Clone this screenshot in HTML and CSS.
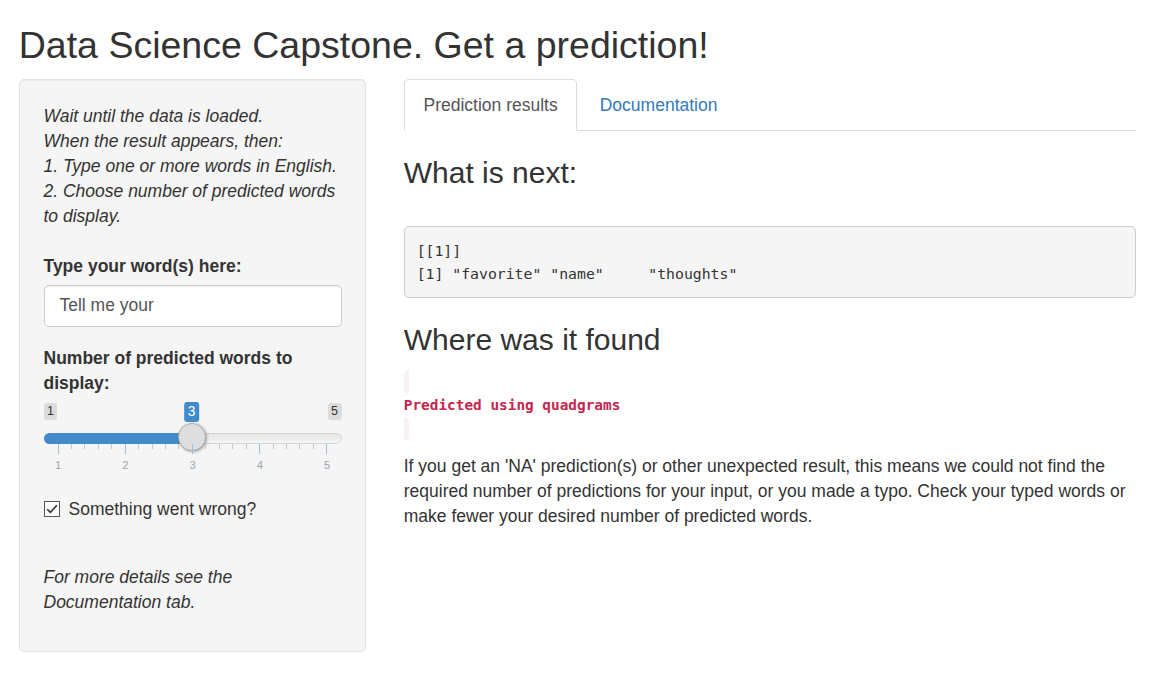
FILE: index.html
```html
<!DOCTYPE html>
<html>
<head>
<meta charset="utf-8">
<title>Data Science Capstone</title>
<link rel="stylesheet" href="styles.css">
</head>
<body>
<div class="container">
  <h2 class="title">Data Science Capstone. Get a prediction!</h2>
  <div class="row">
    <div class="sidebar">
      <form class="well">
        <p class="intro"><em>Wait until the data is loaded.<br>When the result appears, then:<br>1. Type one or more words in English.<br>2. Choose number of predicted words to display.</em></p>
        <div class="form-group">
          <label class="control-label">Type your word(s) here:</label>
          <div class="text-input">Tell me your</div>
        </div>
        <div class="form-group slider-group">
          <label class="control-label">Number of predicted words to display:</label>
          <div class="irs">
            <span class="irs-min">1</span>
            <span class="irs-max">5</span>
            <span class="irs-single">3</span>
            <span class="irs-line"></span>
            <span class="irs-bar"></span>
            <span class="irs-handle"></span>
            <div class="irs-grid">
              <div class="ticks">
                <span class="pol big"></span><span class="pol"></span><span class="pol"></span><span class="pol"></span><span class="pol"></span>
                <span class="pol big"></span><span class="pol"></span><span class="pol"></span><span class="pol"></span><span class="pol"></span>
                <span class="pol big"></span><span class="pol"></span><span class="pol"></span><span class="pol"></span><span class="pol"></span>
                <span class="pol big"></span><span class="pol"></span><span class="pol"></span><span class="pol"></span><span class="pol"></span>
                <span class="pol big"></span>
              </div>
              <div class="grid-text">
                <span class="gt"><span>1</span></span>
                <span class="gt"><span>2</span></span>
                <span class="gt"><span>3</span></span>
                <span class="gt"><span>4</span></span>
                <span class="gt"><span>5</span></span>
              </div>
            </div>
          </div>
        </div>
        <div class="checkbox">
          <span class="check-box"><svg width="16" height="16" viewBox="0 0 16 16"><rect x="0.5" y="0.5" width="15" height="15" fill="#fff" stroke="#555"/><polyline points="3.2,8.2 6.4,11.4 12.8,4.4" fill="none" stroke="#333" stroke-width="1.6"/></svg></span>
          <span>Something went wrong?</span>
        </div>
        <p class="outro"><em>For more details see the<br>Documentation tab.</em></p>
      </form>
    </div>
    <div class="main">
      <ul class="nav-tabs">
        <li class="tab active"><a>Prediction results</a></li>
        <li class="tab"><a>Documentation</a></li>
      </ul>
      <div class="tab-pane">
        <h3 class="h-next">What is next:</h3>
        <pre class="out">[[1]]
[1] "favorite" "name"     "thoughts"</pre>
        <h3 class="h-found">Where was it found</h3>
        <div class="found"><code><div class="found-text">Predicted using quadgrams</div></code></div>
        <p class="note">If you get an 'NA' prediction(s) or other unexpected result, this means we could not find the required number of predictions for your input, or you made a typo. Check your typed words or make fewer your desired number of predicted words.</p>
      </div>
    </div>
  </div>
</div>
</body>
</html>
```
FILE: styles.css
```css
* { box-sizing: border-box; }
html, body { margin: 0; padding: 0; background: #fff; }
body {
  font-family: "Liberation Sans", Arial, Helvetica, sans-serif;
  font-size: 17.5px;
  line-height: 25px;
  color: #333;
}
.container { padding: 0 18.75px; }
.title {
  font-size: 37.5px;
  font-weight: 500;
  line-height: 1.1;
  margin: 25px 0 12.5px;
}
.row { display: flex; gap: 37.5px; align-items: flex-start; }
.sidebar { width: 347.5px; flex: none; }
.main { flex: 1; min-width: 0; }

.well {
  background: #f5f5f5;
  border: 1px solid #e3e3e3;
  border-radius: 5px;
  box-shadow: inset 0 1px 1px rgba(0,0,0,.05);
  padding: 23.75px;
  margin: 0 0 25px;
}
.intro { margin: 0 0 25px; }
.outro { margin: 43px 0 12.5px; }
.form-group { margin-bottom: 18.75px; }
.control-label {
  display: block;
  font-weight: bold;
  margin-bottom: 6.25px;
}
.text-input {
  height: 42.5px;
  border: 1px solid #ccc;
  border-radius: 5px;
  background: #fff;
  box-shadow: inset 0 1px 1px rgba(0,0,0,.075);
  padding: 7.5px 15px;
  font-size: 17.5px;
  line-height: 25px;
  color: #555;
}
.slider-group { margin-bottom: 0; }

.irs { position: relative; height: 94px; }
.irs-min, .irs-max {
  position: absolute;
  top: 1px;
  font-size: 12.5px;
  line-height: 15px;
  padding: 1px 3.5px;
  background: rgba(0,0,0,0.1);
  border-radius: 3px;
  color: #333;
}
.irs-min { left: 0; }
.irs-max { right: 0; }
.irs-single {
  position: absolute;
  top: 0;
  left: 148px;
  transform: translateX(-50%);
  font-size: 13.75px;
  line-height: 17.5px;
  padding: 1px 4px;
  background: #428bca;
  color: #fff;
  border-radius: 3px;
}
.irs-line {
  position: absolute;
  left: 0; right: 0;
  top: 31px;
  height: 11px;
  border: 1px solid #d4d4d4;
  border-radius: 20px;
  background: linear-gradient(#e4e4e4, #f5f5f5);
}
.irs-bar {
  position: absolute;
  left: 0;
  width: 148px;
  top: 31px;
  height: 11px;
  background: #428bca;
  border-radius: 20px 0 0 20px;
}
.irs-handle {
  position: absolute;
  left: 134.5px;
  top: 21px;
  width: 27.5px;
  height: 27.5px;
  border-radius: 50%;
  background: #dedede;
  border: 1px solid #aaa;
  box-shadow: 1px 1px 3px rgba(0,0,0,.3);
}
.irs-grid {
  position: absolute;
  left: 14px;
  width: 270px;
  top: 42px;
}
.ticks {
  display: flex;
  justify-content: space-between;
  align-items: flex-start;
  height: 10px;
}
.pol { width: 1px; height: 5px; background: #c6c6c6; }
.pol.big { height: 10px; background: #9dc0e2; }
.grid-text {
  display: flex;
  justify-content: space-between;
  margin-top: 4px;
  font-size: 11.25px;
  line-height: 14px;
  color: #99a4ac;
}
.gt { width: 1px; display: flex; justify-content: center; }

.checkbox {
  display: flex;
  align-items: center;
  margin: 0.5px 0 0;
  height: 25px;
}
.check-box { width: 25px; display: flex; align-items: center; flex: none; }
.check-box svg { display: block; }

.nav-tabs {
  list-style: none;
  margin: 0;
  padding: 0;
  display: flex;
  border-bottom: 1px solid #ddd;
}
.tab { margin-bottom: -1px; margin-right: 2.5px; }
.tab a {
  display: block;
  padding: 13.25px 18.75px 11.75px;
  line-height: 25px;
  border: 1px solid transparent;
  border-radius: 5px 5px 0 0;
  color: #337ab7;
}
.tab.active a {
  color: #555;
  background: #fff;
  border-color: #ddd #ddd transparent;
}
.tab-pane h3 {
  font-size: 30px;
  font-weight: 500;
  line-height: 1.1;
  margin: 25px 0 12.5px;
}
.h-next { margin-bottom: 37px !important; }
.out {
  margin: 0 0 12.5px;
  padding: 11.875px;
  background: #f5f5f5;
  border: 1px solid #ccc;
  border-radius: 5px;
  font-family: "DejaVu Sans Mono", "Liberation Mono", monospace;
  font-size: 14.8px;
  line-height: 23.2px;
  color: #333;
  white-space: pre;
}
.found { margin: 13.5px 0 12.5px; }
.found code {
  font-family: "DejaVu Sans Mono", "Liberation Mono", monospace;
  font-size: 15.75px;
  line-height: 22.5px;
  padding: 2.5px 5px;
  background: #f9f2f4;
  color: #c7254e;
  border-radius: 5px;
}
.found-text {
  font-weight: bold;
  font-size: 14.4px;
  line-height: 22.5px;
}
.note { margin: 0 0 12.5px; }
```
